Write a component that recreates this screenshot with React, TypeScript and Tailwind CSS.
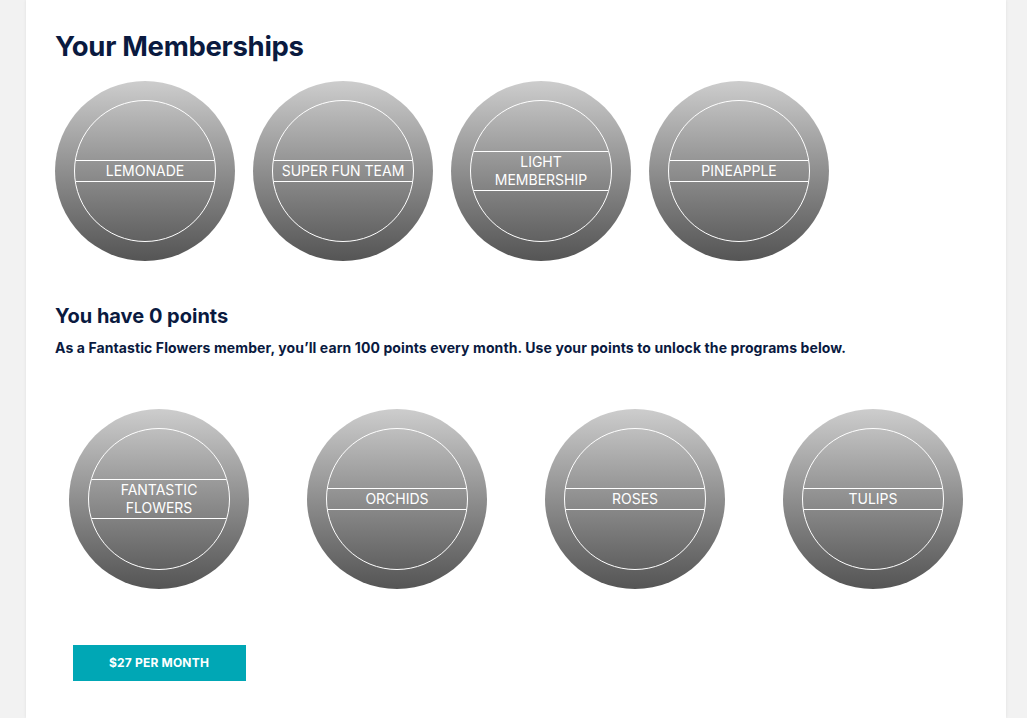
import React from "react";

const memberships = [["LEMONADE"], ["SUPER FUN TEAM"], ["LIGHT", "MEMBERSHIP"], ["PINEAPPLE"]];
const programs = [["FANTASTIC", "FLOWERS"], ["ORCHIDS"], ["ROSES"], ["TULIPS"]];

function Badge({ lines }: { lines: string[] }) {
    return (
        <div className="w-[180px] h-[180px] shrink-0 rounded-full bg-gradient-to-b from-[#cdcdcd] to-[#555555] p-[19px]">
            <div className="w-full h-full rounded-full border border-white flex items-center overflow-hidden">
                <div className="w-full border-y border-white flex flex-col items-center justify-center py-[1px] text-white text-[14px] leading-[18px]">
                    {lines.map((l) => (
                        <span key={l}>{l}</span>
                    ))}
                </div>
            </div>
        </div>
    );
}

export default function App() {
    return (
        <div className="min-h-[718px] bg-[#f2f2f2] font-['Inter',sans-serif]">
            <div className="mx-[26px] w-[980px] min-h-[718px] bg-white shadow-[0_0_3px_rgba(0,0,0,0.08)] px-[29px] pt-[29px] text-[#0a1a3f]">
                <h1 className="text-[27.5px] font-bold leading-[34px] tracking-[-0.3px]">Your Memberships</h1>
                <div className="flex gap-[18px] mt-[18px]">
                    {memberships.map((m) => (
                        <Badge key={m.join(" ")} lines={m} />
                    ))}
                </div>
                <h2 className="mt-[42px] text-[20px] font-bold leading-[26px]">You have 0 points</h2>
                <p className="mt-[9px] text-[14px] font-bold leading-[20px] tracking-[0.1px]">
                    As a Fantastic Flowers member, you’ll earn 100 points every month. Use your points to unlock the programs below.
                </p>
                <div className="grid grid-cols-4 mx-[-15px] mt-[51px]">
                    {programs.map((p) => (
                        <div key={p.join(" ")} className="flex justify-center">
                            <Badge lines={p} />
                        </div>
                    ))}
                </div>
                <div className="grid grid-cols-4 mx-[-15px] mt-[56px]">
                    <div className="flex justify-center">
                        <button className="w-[173px] h-[36px] bg-[#00a7b5] text-white text-[12px] font-bold tracking-[0.2px]">
                            $27 PER MONTH
                        </button>
                    </div>
                </div>
            </div>
        </div>
    );
}
